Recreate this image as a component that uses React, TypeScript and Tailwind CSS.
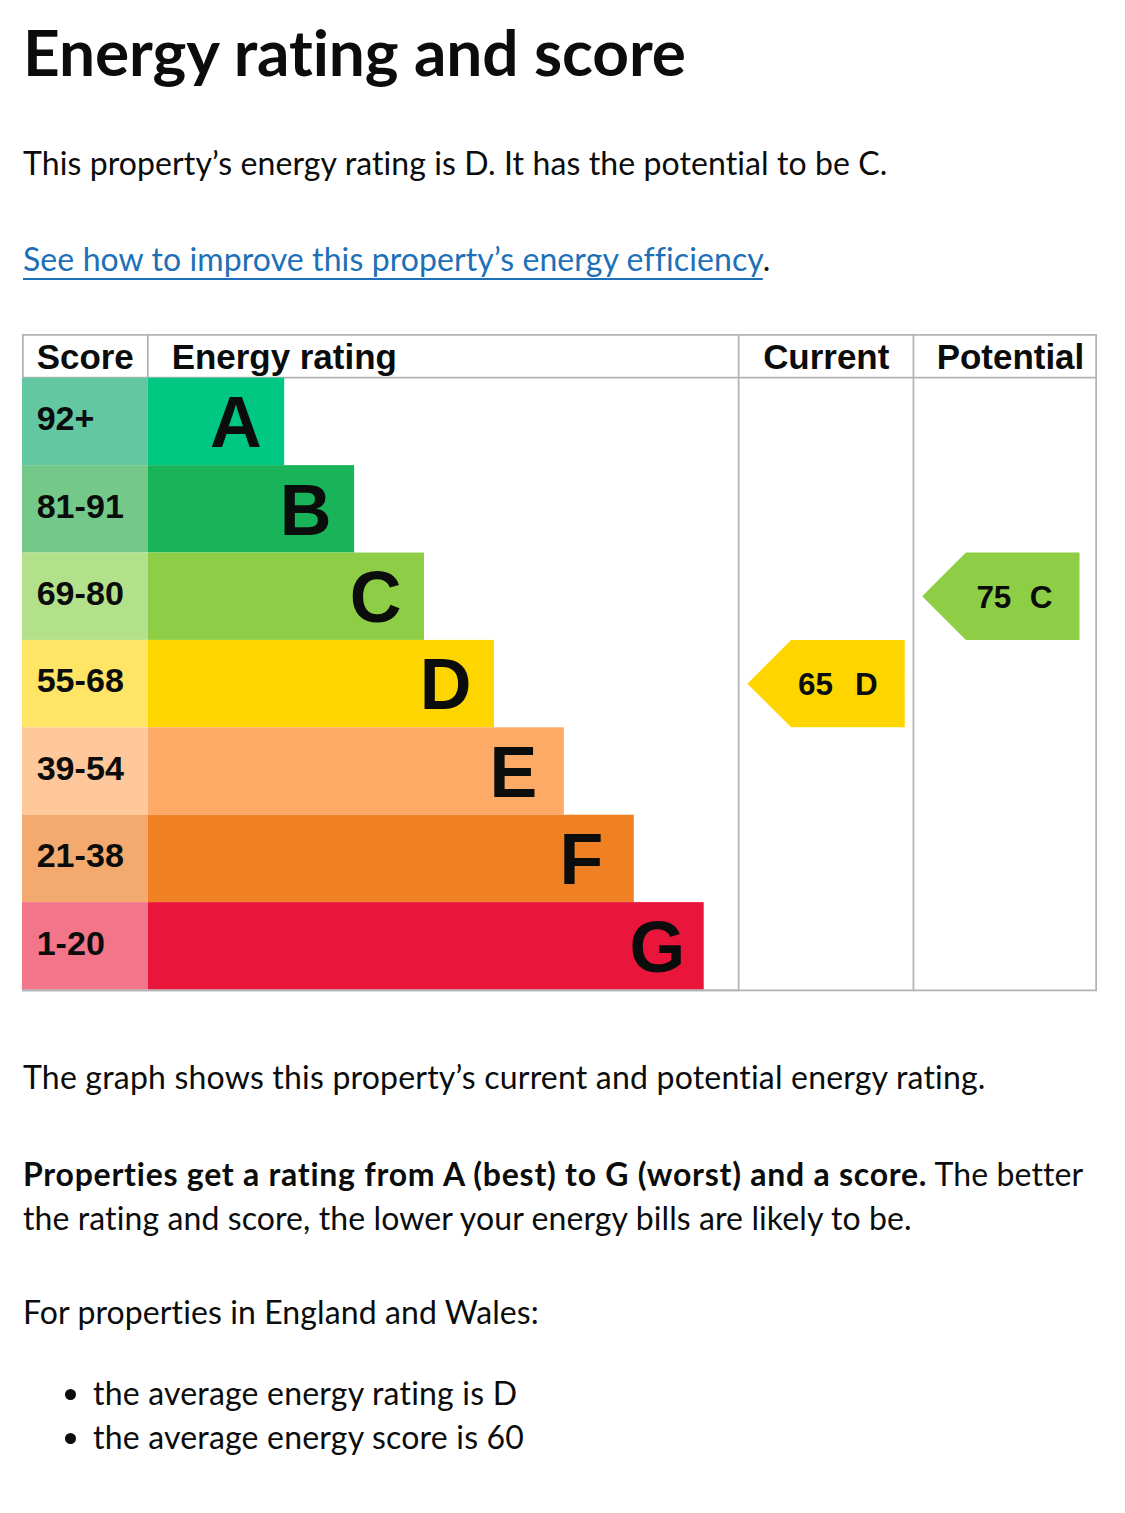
import React from "react";

const bands = [
  { score: "92+", letter: "A", bar: "#00c781", cell: "#63c7a1" },
  { score: "81-91", letter: "B", bar: "#19b459", cell: "#74c98a" },
  { score: "69-80", letter: "C", bar: "#8dce46", cell: "#b3e08a" },
  { score: "55-68", letter: "D", bar: "#ffd500", cell: "#ffe566" },
  { score: "39-54", letter: "E", bar: "#fcaa65", cell: "#fec89a" },
  { score: "21-38", letter: "F", bar: "#ef8023", cell: "#f4aa6e" },
  { score: "1-20", letter: "G", bar: "#e9153b", cell: "#f2758a" },
];

function EpcChart() {
  const font = { fontFamily: '"Liberation Sans", Arial, sans-serif', fontWeight: 700 } as const;
  return (
    <svg
      width="1075"
      height="658"
      viewBox="0 0 615 376.4"
      className="block"
      role="img"
      aria-label="Energy rating chart"
    >
      <rect x="0.5" y="0.5" width="614" height="375" fill="#ffffff" stroke="#b1b4b6" strokeWidth="1" />
      <line x1="0" y1="25" x2="615" y2="25" stroke="#b1b4b6" strokeWidth="1" />
      <line x1="72" y1="0" x2="72" y2="25" stroke="#b1b4b6" strokeWidth="1" />
      <line x1="410" y1="0" x2="410" y2="376" stroke="#b1b4b6" strokeWidth="1" />
      <line x1="510" y1="0" x2="510" y2="376" stroke="#b1b4b6" strokeWidth="1" />

      <g style={font} fill="#0b0c0c" fontSize="20">
        <text x="8.4" y="20">Score</text>
        <text x="85.6" y="20">Energy rating</text>
        <text x="424" y="20">Current</text>
        <text x="523.3" y="20">Potential</text>
      </g>

      {bands.map((b, i) => {
        const top = 25 + 50 * i;
        const w = 78 + 40 * i;
        return (
          <g key={b.letter} style={font} fill="#0b0c0c">
            <rect x="0" y={top} width="72" height="50" fill={b.cell} />
            <rect x="72" y={top} width={w} height="50" fill={b.bar} />
            <text x="8.4" y={top + 30} fontSize="19.5">
              {b.score}
            </text>
            <text x={72 + w - 42.5} y={top + 39.8} fontSize="41">
              {b.letter}
            </text>
          </g>
        );
      })}

      <line x1="0" y1="375.5" x2="410" y2="375.5" stroke="#b1b4b6" strokeWidth="1" />

      <g style={font} fill="#0b0c0c" fontSize="18">
        <polygon points="415,200 440,175 505,175 505,225 440,225" fill="#ffd500" />
        <text x="444" y="206.5">65</text>
        <text x="489.5" y="206.5" textAnchor="end">
          D
        </text>
        <polygon points="515,150 540,125 605,125 605,175 540,175" fill="#8dce46" />
        <text x="546" y="156.5">75</text>
        <text x="589.5" y="156.5" textAnchor="end">
          C
        </text>
      </g>
    </svg>
  );
}

export default function App() {
  return (
    <div
      className="bg-white text-[#0b0c0c] min-h-[1513px] pl-[22px] pr-[28px] pt-[17px]"
      style={{ fontFamily: 'Lato, "Noto Sans", Arial, sans-serif' }}
    >
      <h1 className="ml-[1px] text-[64px] leading-[70px] font-bold tracking-[-0.1px]">Energy rating and score</h1>

      <p className="ml-[1px] mt-[54px] text-[32px] leading-[44px] tracking-[0.1px]">
        This property’s energy rating is D. It has the potential to be C.
      </p>

      <p className="ml-[1px] mt-[52px] text-[32px] leading-[44px] tracking-[0.1px]">
        <a
          href="#improve"
          className="text-[#1d70b8] underline decoration-[2px] underline-offset-[7px]"
        >
          See how to improve this property’s energy efficiency
        </a>
        .
      </p>

      <div className="mt-[53px]">
        <EpcChart />
      </div>

      <p className="ml-[1px] mt-[63px] text-[32px] leading-[44px] tracking-[0.2px]">
        The graph shows this property’s current and potential energy rating.
      </p>

      <p className="ml-[1px] mt-[53px] text-[32px] leading-[44px] tracking-[0.1px]">
        <strong className="font-bold tracking-[0.75px]">
          Properties get a rating from A (best) to G (worst) and a score.
        </strong>{" "}
        The better
        <br />
        the rating and score, the lower your energy bills are likely to be.
      </p>

      <p className="ml-[1px] mt-[50px] text-[32px] leading-[44px] tracking-[0.1px]">
        For properties in England and Wales:
      </p>

      <ul className="mt-[37px] ml-[1px] pl-[70px] list-disc text-[32px] leading-[44px] tracking-[0.2px]">
        <li>the average energy rating is D</li>
        <li>the average energy score is 60</li>
      </ul>
    </div>
  );
}
